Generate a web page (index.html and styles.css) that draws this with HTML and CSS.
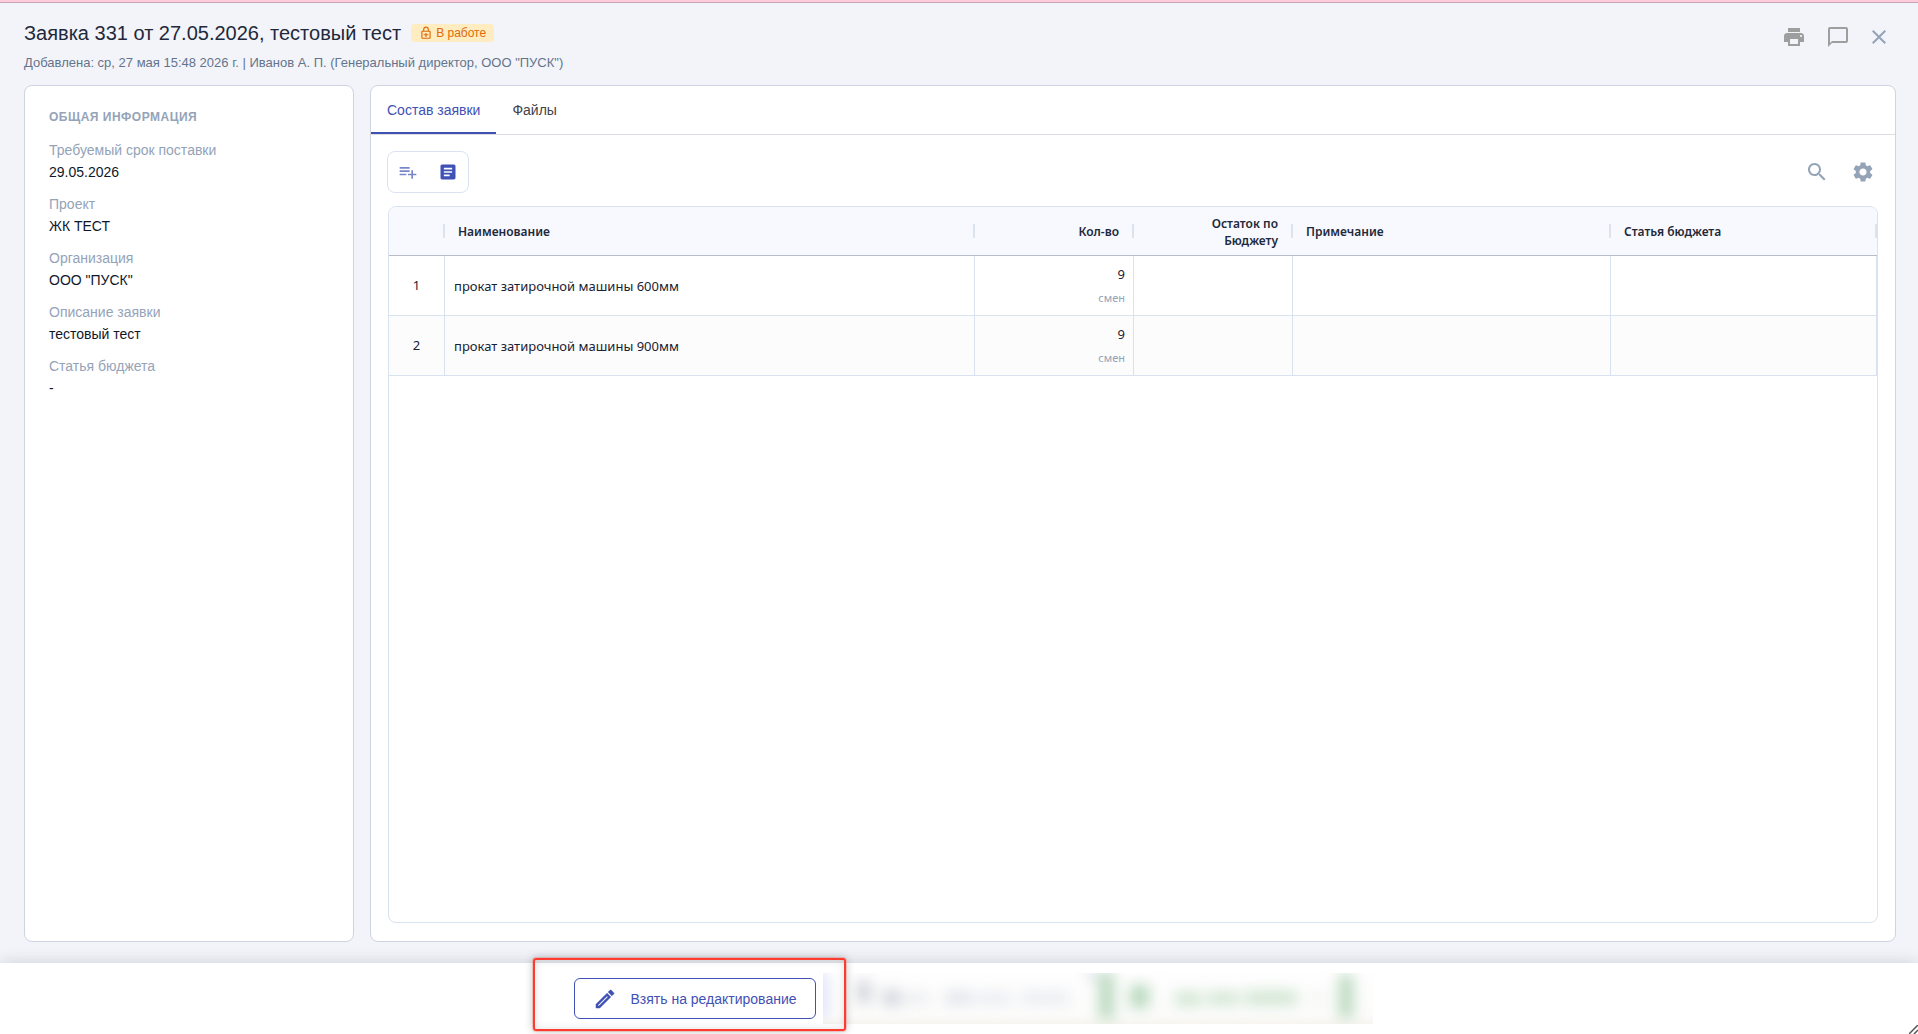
FILE: index.html
```html
<!DOCTYPE html>
<html lang="ru">

<head>
    <meta charset="UTF-8">
    <title>Заявка 331</title>
    <link rel="stylesheet" href="styles.css">
</head>

<body>
    <header class="header">
        <div>
            <div class="title-row">
                <h1>Заявка 331 от 27.05.2026, тестовый тест</h1>
                <span class="badge">
                    <svg width="14" height="14" viewBox="0 0 24 24"><path d="M18 8h-1V6c0-2.8-2.2-5-5-5S7 3.200 7 6v2H6c-1.100 0-2 .9-2 2v10c0 1.100.9 2 2 2h12c1.100 0 2-.9 2-2V10c0-1.100-.9-2-2-2zM9 6c0-1.700 1.300-3 3-3s3 1.300 3 3v2H9V6zm9 14H6V10h12v10zm-7-1h2v-3h3v-2h-3v-2h-2v2H8v2h3z"/></svg>
                    В работе
                </span>
            </div>
            <p class="subtitle">Добавлена: ср, 27 мая 15:48 2026 г. | Иванов А. П. (Генеральный директор, ООО "ПУСК")</p>
        </div>
        <div class="header-actions">
            <button class="icon-btn" aria-label="Печать">
                <svg width="24" height="24" viewBox="0 0 24 24"><path d="M19 8H5c-1.660 0-3 1.340-3 3v6h4v4h12v-4h4v-6c0-1.660-1.340-3-3-3zm-3 11H8v-5h8v5zm3-7c-.55 0-1-.45-1-1s.45-1 1-1 1 .45 1 1-.45 1-1 1zm-1-9H6v4h12V3z"/></svg>
            </button>
            <button class="icon-btn" aria-label="Комментарии">
                <svg width="24" height="24" viewBox="0 0 24 24"><path d="M20 2H4c-1.100 0-2 .9-2 2v18l4-4h14c1.100 0 2-.9 2-2V4c0-1.100-.9-2-2-2zm0 14H6l-2 2V4h16v12z"/></svg>
            </button>
            <button class="icon-btn close" aria-label="Закрыть">
                <svg width="24" height="24" viewBox="0 0 24 24"><path d="M19 6.410 17.590 5 12 10.590 6.410 5 5 6.410 10.590 12 5 17.590 6.410 19 12 13.410 17.590 19 19 17.590 13.410 12z"/></svg>
            </button>
        </div>
    </header>

    <main class="main">
        <aside class="panel info">
            <h2>Общая информация</h2>
            <dl>
                <dt>Требуемый срок поставки</dt>
                <dd>29.05.2026</dd>
                <dt>Проект</dt>
                <dd>ЖК ТЕСТ</dd>
                <dt>Организация</dt>
                <dd>ООО "ПУСК"</dd>
                <dt>Описание заявки</dt>
                <dd>тестовый тест</dd>
                <dt>Статья бюджета</dt>
                <dd>-</dd>
            </dl>
        </aside>

        <section class="panel content">
            <nav class="tabs">
                <button class="tab active">Состав заявки</button>
                <button class="tab">Файлы</button>
            </nav>
            <div class="toolbar">
                <div class="group">
                    <button class="icon-btn light" aria-label="Добавить в список">
                        <svg width="20" height="20" viewBox="0 0 24 24"><path d="M14 10H2v2h12v-2zm0-4H2v2h12V6zm4 8v-4h-2v4h-4v2h4v4h2v-4h4v-2h-4zM2 16h8v-2H2v2z"/></svg>
                    </button>
                    <button class="icon-btn blue" aria-label="Описание">
                        <svg width="20" height="20" viewBox="0 0 24 24"><path d="M19 3H5c-1.100 0-2 .9-2 2v14c0 1.100.9 2 2 2h14c1.100 0 2-.9 2-2V5c0-1.100-.9-2-2-2zm-5 14H7v-2h7v2zm3-4H7v-2h10v2zm0-4H7V7h10v2z"/></svg>
                    </button>
                </div>
                <div class="tools">
                    <button class="icon-btn slate" aria-label="Поиск">
                        <svg width="24" height="24" viewBox="0 0 24 24"><path d="M15.500 14h-.79l-.28-.27C15.410 12.590 16 11.110 16 9.500 16 5.910 13.090 3 9.500 3S3 5.910 3 9.500 5.910 16 9.500 16c1.610 0 3.090-.59 4.230-1.570l.27.28v.79l5 4.990L20.490 19l-4.990-5zm-6 0C7.010 14 5 11.990 5 9.500S7.010 5 9.500 5 14 7.010 14 9.500 11.990 14 9.500 14z"/></svg>
                    </button>
                    <button class="icon-btn slate" aria-label="Настройки">
                        <svg width="24" height="24" viewBox="0 0 24 24"><path d="M19.140 12.940c.04-.3.060-.61.060-.94 0-.32-.02-.64-.07-.94l2.030-1.580c.18-.14.230-.41.120-.61l-1.920-3.320c-.12-.22-.37-.29-.59-.22l-2.390.96c-.5-.38-1.030-.7-1.620-.94l-.36-2.540c-.04-.24-.24-.41-.48-.41h-3.840c-.24 0-.43.170-.47.410l-.36 2.540c-.59.240-1.130.570-1.620.94l-2.390-.96c-.22-.08-.47 0-.59.220L2.740 8.870c-.12.210-.08.470.12.610l2.030 1.580c-.05.3-.09.630-.09.940s.02.640.07.940l-2.030 1.580c-.18.140-.23.410-.12.610l1.920 3.320c.12.220.37.290.59.220l2.390-.96c.5.380 1.030.7 1.620.94l.36 2.540c.05.240.24.410.48.410h3.840c.24 0 .44-.17.470-.41l.36-2.540c.59-.24 1.130-.56 1.620-.94l2.390.96c.22.080.47 0 .59-.22l1.920-3.320c.12-.22.070-.47-.12-.61l-2.010-1.580zM12 15.600c-1.980 0-3.600-1.620-3.600-3.600s1.620-3.600 3.600-3.600 3.600 1.620 3.600 3.600-1.620 3.600-3.600 3.600z"/></svg>
                    </button>
                </div>
            </div>
            <div class="grid">
                <table>
                    <colgroup>
                        <col class="col-num">
                        <col>
                        <col class="col-qty">
                        <col class="col-qty">
                        <col class="col-note">
                        <col class="col-budget">
                    </colgroup>
                    <thead>
                        <tr>
                            <th></th>
                            <th>Наименование</th>
                            <th class="right">Кол-во</th>
                            <th class="right">Остаток по<br>Бюджету</th>
                            <th>Примечание</th>
                            <th>Статья бюджета</th>
                        </tr>
                    </thead>
                    <tbody>
                        <tr>
                            <td class="num">1</td>
                            <td>прокат затирочной машины 600мм</td>
                            <td class="right"><span class="qty">9</span><span class="unit">смен</span></td>
                            <td></td>
                            <td></td>
                            <td></td>
                        </tr>
                        <tr>
                            <td class="num">2</td>
                            <td>прокат затирочной машины 900мм</td>
                            <td class="right"><span class="qty">9</span><span class="unit">смен</span></td>
                            <td></td>
                            <td></td>
                            <td></td>
                        </tr>
                    </tbody>
                </table>
            </div>
        </section>
    </main>

    <footer class="footer">
        <div class="edit-wrap">
            <button class="edit-btn">
                <svg width="24" height="24" viewBox="0 0 24 24"><path stroke="currentColor" stroke-width="0.5" d="M14.060 9.020l.92.920L5.920 19H5v-.92l9.060-9.060M17.660 3c-.25 0-.51.1-.7.290l-1.830 1.830 3.750 3.750 1.830-1.830c.39-.39.390-1.020 0-1.410l-2.340-2.340c-.2-.2-.45-.29-.71-.29zm-3.600 3.190L3 17.250V21h3.750L17.810 9.940l-3.750-3.750z"/></svg>
                Взять на редактирование
            </button>
            <div class="marker"></div>
        </div>
        <!-- hidden actions, blurred out -->
        <svg class="blurred" width="550" height="51" viewBox="0 0 550 51" aria-hidden="true">
            <defs>
                <filter id="blur" filterUnits="userSpaceOnUse" x="-40" y="-40" width="630" height="131" color-interpolation-filters="sRGB"><feGaussianBlur stdDeviation="7"/></filter>
                <linearGradient id="base" x1="0" y1="0" x2="0" y2="1">
                    <stop offset="0" stop-color="#fefefe"/>
                    <stop offset="0.8" stop-color="#fcfcfb"/>
                    <stop offset="1" stop-color="#f7f5f0"/>
                </linearGradient>
            </defs>
            <rect width="550" height="51" fill="url(#base)"/>
            <g filter="url(#blur)">
                <rect x="-10" y="0" width="14" height="45" fill="#dde1f8"/>
                <rect x="34" y="8" width="14" height="22" fill="#d2d4da"/>
                <rect x="60" y="17" width="17" height="16" fill="#d2d4dc"/>
                <rect x="80" y="20" width="26" height="11" fill="#ebecf0"/>
                <rect x="122" y="19" width="28" height="12" fill="#e1e3ea"/>
                <rect x="154" y="20" width="34" height="11" fill="#e9ebf0"/>
                <rect x="198" y="19" width="48" height="12" fill="#e9ecf0"/>
                <rect x="264" y="-4" width="12" height="12" fill="#e4e8ec"/>
                <rect x="276" y="0" width="15" height="46" fill="#b9d8bd"/>
                <rect x="307" y="12" width="19" height="23" fill="#b8d9bd"/>
                <rect x="352" y="19" width="26" height="14" fill="#d0e5d1"/>
                <rect x="384" y="19" width="32" height="13" fill="#d0e5d1"/>
                <rect x="422" y="18" width="52" height="14" fill="#d0e5d1"/>
                <rect x="488" y="20" width="16" height="10" fill="#f2f5f2"/>
                <rect x="516" y="2" width="14" height="43" fill="#b9d8bd"/>
            </g>
        </svg>
        <svg class="resize" width="9" height="9" viewBox="0 0 9 9"><path d="M0 9 9 0M5 9l4-4" stroke="#555" stroke-width="1.500"/></svg>
    </footer>
</body>

</html>
```

FILE: styles.css
```css
* {
    box-sizing: border-box;
}

body {
    margin: 0;
    min-height: 100vh;
    display: flex;
    flex-direction: column;
    border-top: 2px solid #ffccdb;
    background-color: #f3f4fa;
    color: #1a2233;
    font: 14px/20px "Liberation Sans", Arial, sans-serif;
}

h1, h2, p, dl, dd {
    margin: 0;
}

button {
    padding: 0;
    border: none;
    background: none;
    color: inherit;
    font: inherit;
    cursor: pointer;
}

svg {
    display: block;
    fill: currentColor;
}

/* header */
.header {
    display: flex;
    justify-content: space-between;
    padding: 18px 27px 14px 24px;
    border-top: 1px solid #c9a3b8;
}

.title-row {
    display: flex;
    align-items: center;
    gap: 10px;
    height: 24px;
}

h1 {
    font-size: 20px;
    font-weight: 400;
    line-height: 24px;
    color: #1e293b;
}

.badge {
    display: flex;
    align-items: center;
    gap: 3px;
    height: 18px;
    padding: 0 8px;
    border-radius: 4px;
    background-color: #ffecc0;
    color: #dd6b0a;
    font-size: 12px;
}

.subtitle {
    margin-top: 9px;
    line-height: 17px;
    font-size: 13px;
    color: #64748b;
}

.header-actions {
    display: flex;
    align-items: center;
    gap: 20px;
    height: 32px;
    color: #9e9e9e;
}

.close {
    margin-left: -3px;
    color: #94a3b8;
}

/* panels */
.main {
    flex: 1;
    display: flex;
    gap: 16px;
    padding: 0 22px 21px 24px;
}

.panel {
    border: 1px solid #cfd4e2;
    border-radius: 8px;
    background-color: #fff;
}

.info {
    width: 330px;
    padding: 22px 24px;
}

h2 {
    margin-bottom: 12px;
    font-size: 12px;
    line-height: 18px;
    letter-spacing: 0.5px;
    text-transform: uppercase;
    color: #94a3b8;
}

dt {
    line-height: 24px;
    color: #94a3b8;
}

dd {
    margin-bottom: 10px;
    color: #0f172a;
}

.content {
    flex: 1;
    display: flex;
    flex-direction: column;
}

.tabs {
    display: flex;
    height: 49px;
    border-bottom: 1px solid #dcdee4;
}

.tab {
    padding: 2px 16px 0;
    border-bottom: 2px solid transparent;
    color: #3f4248;
}

.tab.active {
    border-color: #3f51b5;
    color: #3f51b5;
}

.toolbar {
    display: flex;
    align-items: center;
    justify-content: space-between;
    padding: 16px 20px 13px 16px;
}

.group {
    display: flex;
    align-items: center;
    gap: 20px;
    height: 42px;
    padding: 0 10px;
    border: 1px solid #dbe3f1;
    border-radius: 8px;
}

.tools {
    display: flex;
    gap: 22px;
}

.light {
    color: #7986cb;
}

.blue {
    color: #3f51b5;
}

.slate {
    color: #94a3b8;
}

/* table */
.grid {
    flex: 1;
    margin: 0 17px 18px;
    border: 1px solid #d9e2ef;
    border-radius: 8px;
    overflow: hidden;
    font-family: "Noto Sans", sans-serif;
}

table {
    width: 100%;
    table-layout: fixed;
    border-collapse: separate;
    border-spacing: 0;
}

.col-num {
    width: 56px;
}

.col-qty {
    width: 159px;
}

.col-note {
    width: 318px;
}

.col-budget {
    width: 266px;
}

th {
    height: 49px;
    padding: 1px 15px 0 13px;
    border-bottom: 1px solid #b6bcc8;
    background: linear-gradient(#dde3ec, #dde3ec) no-repeat right 17px / 2px 14px #f8f9fe;
    font-size: 12px;
    font-weight: 600;
    line-height: 17px;
    text-align: left;
    color: #1e293b;
}

td {
    height: 60px;
    padding: 0 9px;
    border-right: 1px solid #d9e2ef;
    border-bottom: 1px solid #d9e2ef;
    font-size: 13px;
}

tbody tr:nth-child(even) {
    background-color: #fcfcfc;
}

.right {
    text-align: right;
}

td.right {
    padding-right: 8px;
}

.num {
    padding-bottom: 2px;
    text-align: center;
}

.qty, .unit {
    display: block;
    line-height: 23px;
}

.unit {
    font-size: 11px;
    color: #94a3b8;
}

/* footer */
.footer {
    position: relative;
    display: flex;
    align-items: center;
    justify-content: center;
    gap: 7px;
    height: 71px;
    padding-left: 29px;
    background-color: #fff;
    box-shadow: 0 0 16px rgba(0, 0, 0, 0.15);
}

.edit-wrap {
    position: relative;
}

.edit-btn {
    display: flex;
    align-items: center;
    gap: 13px;
    height: 41px;
    padding: 0 18px;
    border: 1px solid #3f51b5;
    border-radius: 6px;
    color: #3f51b5;
}

/* red frame round the edit button */
.marker {
    position: absolute;
    inset: -20px -30px -12px -41px;
    z-index: 1;
    border: 2px solid #ff3b30;
    border-radius: 3px;
    box-shadow: 0 0 0 1px rgba(255, 59, 48, 0.2), 0 0 8px rgba(0, 0, 0, 0.25), inset 0 0 8px rgba(0, 0, 0, 0.12);
    pointer-events: none;
}

.resize {
    position: absolute;
    right: 0;
    bottom: 0;
}
```
